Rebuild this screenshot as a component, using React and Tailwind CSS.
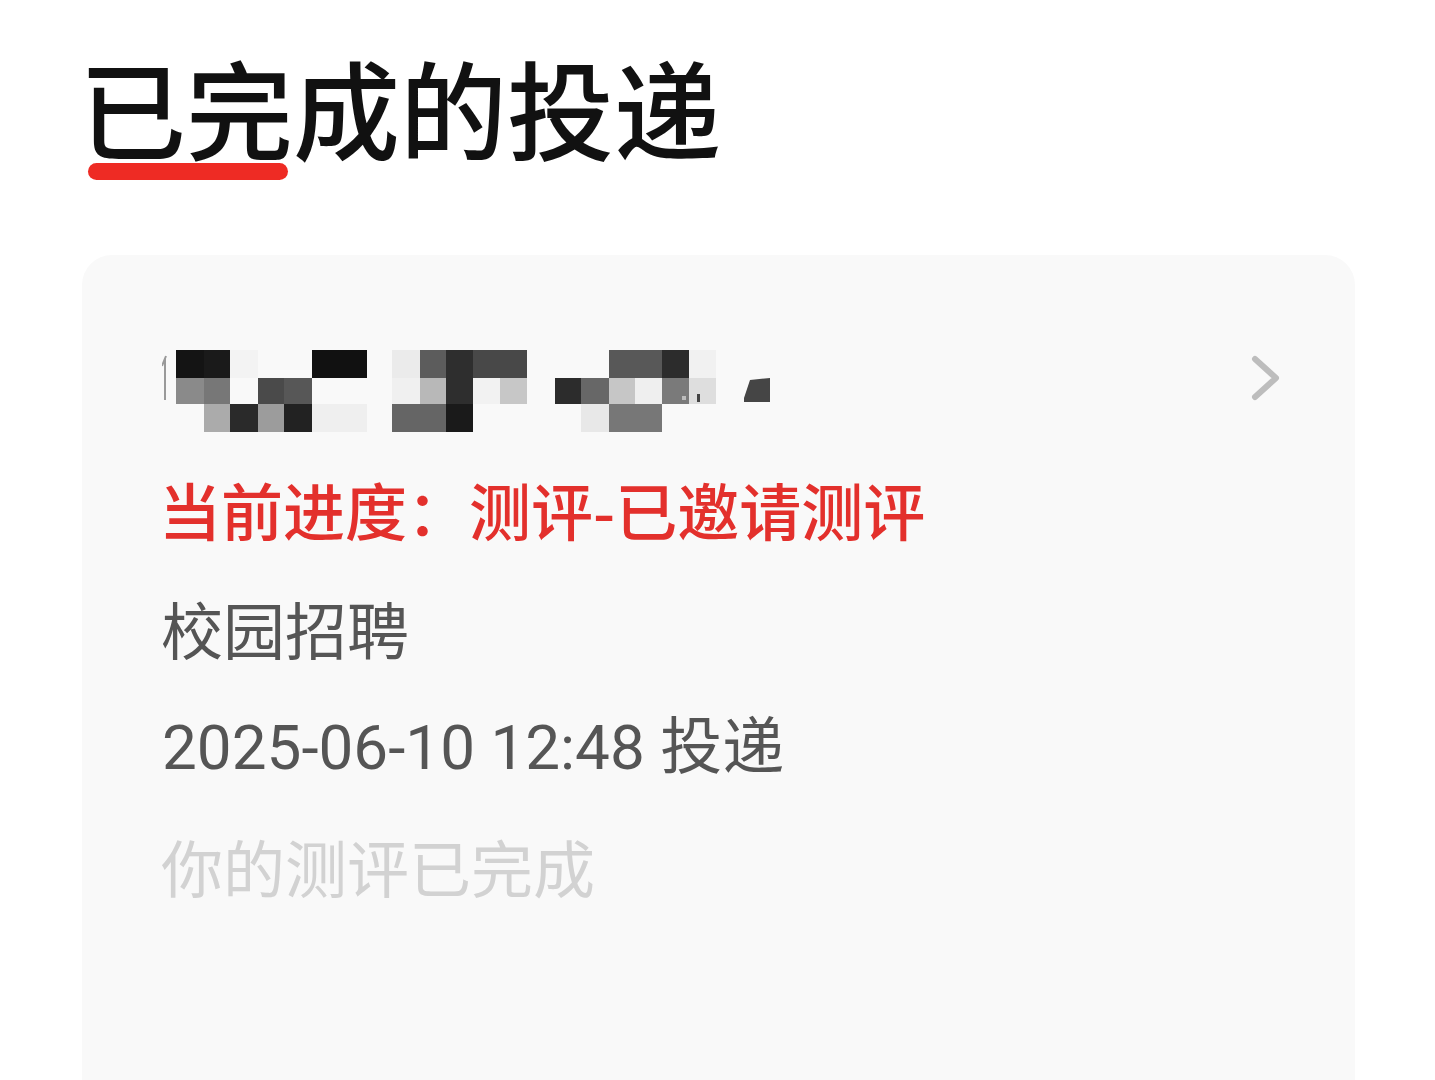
import React from 'react';

const blocks = [
  // first group
  [14, 0, 28, 28, '#141414'], [42, 0, 26, 28, '#1a1a1a'], [68, 0, 28, 28, '#f3f3f3'], [150, 0, 55, 28, '#111111'],
  [14, 28, 28, 26, '#8a8a8a'], [42, 28, 26, 26, '#777777'], [96, 28, 26, 26, '#4a4a4a'], [122, 28, 28, 26, '#575757'],
  [42, 54, 26, 28, '#ababab'], [68, 54, 28, 28, '#2a2a2a'], [96, 54, 26, 28, '#9c9c9c'], [122, 54, 28, 28, '#222222'], [150, 54, 55, 28, '#efefef'],
  // second group
  [230, 0, 28, 28, '#ebebeb'], [258, 0, 26, 28, '#5c5c5c'], [284, 0, 27, 28, '#2e2e2e'], [311, 0, 54, 28, '#484848'],
  [230, 28, 28, 26, '#f0f0f0'], [258, 28, 26, 26, '#b8b8b8'], [284, 28, 27, 26, '#2e2e2e'], [311, 28, 27, 26, '#f2f2f2'], [338, 28, 27, 26, '#c7c7c7'],
  [230, 54, 54, 28, '#656565'], [284, 54, 27, 28, '#1a1a1a'],
  // third group
  [447, 0, 53, 28, '#585858'], [500, 0, 27, 28, '#2c2c2c'], [527, 0, 27, 28, '#f1f1f1'],
  [393, 28, 26, 26, '#2c2c2c'], [419, 28, 28, 26, '#676767'], [447, 28, 26, 26, '#c6c6c6'], [473, 28, 27, 26, '#efefef'], [500, 28, 27, 26, '#7a7a7a'], [527, 28, 27, 26, '#dedede'],
  [419, 54, 28, 28, '#e8e8e8'], [447, 54, 53, 28, '#777777'],
];

function Mosaic() {
  return (
    <svg width="612" height="82" viewBox="0 0 612 82" className="block shrink-0">
      <path d="M4 6 L0 16 M3 8 L3 50" stroke="#9a9a9a" strokeWidth="2" fill="none" />
      {blocks.map(([x, y, w, h, c], i) => (
        <rect key={i} x={x} y={y} width={w} height={h} fill={c} />
      ))}
      <rect x="520" y="46" width="4" height="4" fill="#bdbdbd" />
      <rect x="535" y="44" width="3" height="8" fill="#444" />
      <path d="M582 48 L588 30 L608 28 L608 52 L582 52 Z" fill="#454545" />
    </svg>
  );
}

const cjk = { fontFamily: '"Noto Sans CJK SC", sans-serif' };

export default function App() {
  return (
    <div className="min-h-screen bg-white" style={{ fontFamily: 'Roboto, "Noto Sans CJK SC", sans-serif' }}>
      <div className="pl-[79px] pt-[52px]">
        <h1 className="relative inline-block text-[107px] leading-none font-medium text-[#111111]" style={cjk}>
          已完成的投递
          <span className="absolute left-[9px] top-[111px] h-[17px] w-[200px] rounded-full bg-[#ee2b24]" />
        </h1>
      </div>

      <div className="ml-[82px] mr-[80px] mt-[96px] h-[900px] rounded-[30px] bg-[#f9f9f9] pl-[80px] pr-[73px] pt-[95px]">
        <div className="flex items-start justify-between">
          <Mosaic />
          <svg width="32" height="48" viewBox="0 0 32 48" className="mt-[4px] shrink-0" fill="none" stroke="#bdbdbd" strokeWidth="6" strokeLinecap="round" strokeLinejoin="round">
            <path d="M5 5 L26 24 L5 43" />
          </svg>
        </div>

        <div className="mt-[18px] flex flex-col text-[62px] leading-[119px]">
          <div className="-ml-[3px] font-medium text-[#e3302c]" style={cjk}>当前进度：测评-已邀请测评</div>
          <div className="-ml-[1px] text-[#555555]" style={cjk}>校园招聘</div>
          <div className="text-[#555555]">2025-06-10 12:48 投递</div>
          <div className="-ml-[1px] text-[#d2d2d2]" style={cjk}>你的测评已完成</div>
        </div>
      </div>
    </div>
  );
}
